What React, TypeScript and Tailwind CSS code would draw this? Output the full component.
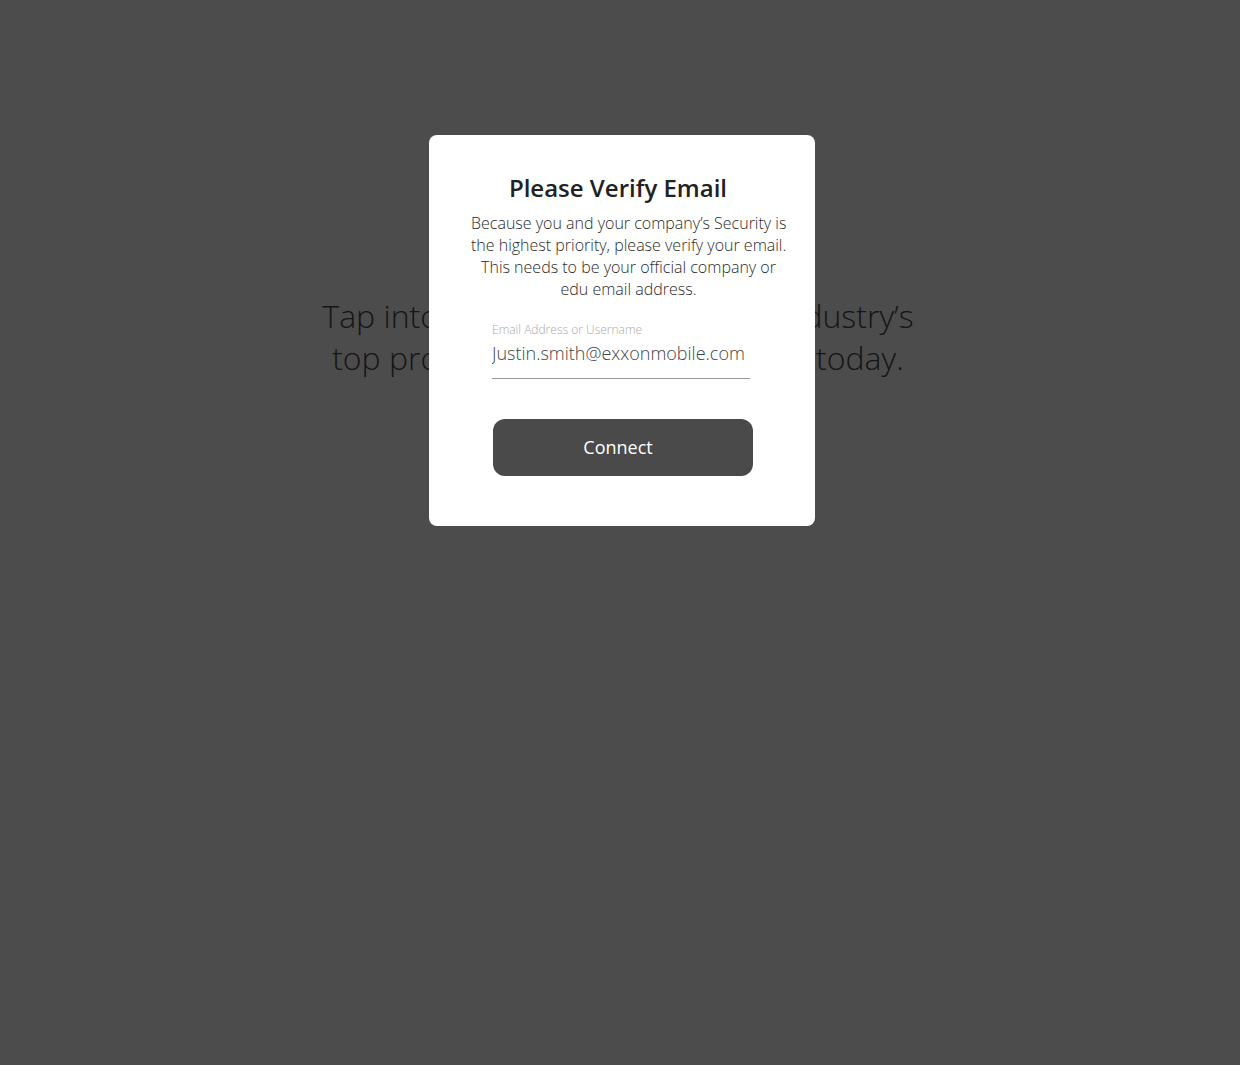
import React, { useState } from "react";

function App() {
  const [email, setEmail] = useState("Justin.smith@exxonmobile.com");

  return (
    <div className="min-h-screen bg-white" style={{ fontFamily: '"Open Sans", "Liberation Sans", sans-serif' }}>
      {/* ===== Page behind the dialog ===== */}
      <main className="pt-[295px] flex flex-col items-center">
        <h2 className="text-[32px] leading-[42px] font-light text-[#4a4a4a] text-center whitespace-nowrap pr-[4px]">
          Tap into the experiences of the industry’s
          <br />
          top professionals. Get connected today.
        </h2>
      </main>

      {/* ===== Overlay + dialog ===== */}
      <div className="fixed inset-0 bg-black/70 flex justify-center items-start pt-[135px] pl-[4px]">
        <div className="w-[386px] bg-white rounded-lg flex flex-col pt-[37px] pb-[50px]">
          <h1 className="text-[24px] leading-[32px] font-semibold text-[#222] text-center pr-[8px]">
            Please Verify Email
          </h1>
          <p className="mt-[8px] ml-[42px] mr-[29px] text-[16px] leading-[22px] font-light text-[#2b2b2b] text-center whitespace-nowrap">
            Because you and your company’s Security is
            <br />
            the highest priority, please verify your email.
            <br />
            This needs to be your official company or
            <br />
            edu email address.
          </p>

          <label className="mt-[22px] ml-[63px] w-[258px] flex flex-col">
            <span className="text-[12px] leading-[16px] font-light text-[#aaa]">Email Address or Username</span>
            <input
              value={email}
              onChange={(e) => setEmail(e.target.value)}
              className="mt-[3px] pl-0 pb-[13px] text-[18px] leading-[24px] font-light text-[#444] bg-transparent outline-none border-b border-[#999]"
            />
          </label>

          <button className="mt-[40px] ml-[64px] w-[260px] h-[57px] rounded-[12px] bg-[#4a4a4a] text-white text-[18px] font-normal pr-[10px]">
            Connect
          </button>
        </div>
      </div>
    </div>
  );
}

export default App;
